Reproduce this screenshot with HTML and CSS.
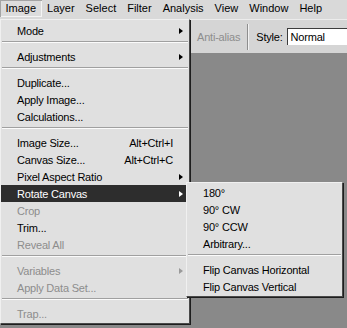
FILE: index.html
```html
<!DOCTYPE html>
<html lang="en">
<head>
    <meta charset="UTF-8">
    <meta name="viewport" content="width=device-width, initial-scale=1.0">
    <title>Image Menu</title>
    <link rel="stylesheet" href="styles.css">
</head>
<body>

    <div class="app">
        <nav class="menubar">
            <span class="menubar-item open">Image</span>
            <span class="menubar-item">Layer</span>
            <span class="menubar-item">Select</span>
            <span class="menubar-item">Filter</span>
            <span class="menubar-item">Analysis</span>
            <span class="menubar-item">View</span>
            <span class="menubar-item">Window</span>
            <span class="menubar-item">Help</span>
        </nav>

        <div class="options">
            <span class="opt-label disabled">Anti-alias</span>
            <span class="opt-sep"></span>
            <span class="opt-label">Style:</span>
            <span class="opt-select">Normal</span>
        </div>

        <div class="workspace"></div>

        <div class="menu main-menu">
            <div class="row">Mode<span class="arrow"></span></div>
            <div class="sep"></div>
            <div class="row">Adjustments<span class="arrow"></span></div>
            <div class="sep"></div>
            <div class="row">Duplicate...</div>
            <div class="row">Apply Image...</div>
            <div class="row">Calculations...</div>
            <div class="sep"></div>
            <div class="row">Image Size...<span class="key">Alt+Ctrl+I</span></div>
            <div class="row">Canvas Size...<span class="key">Alt+Ctrl+C</span></div>
            <div class="row">Pixel Aspect Ratio<span class="arrow"></span></div>
            <div class="row active">Rotate Canvas<span class="arrow"></span></div>
            <div class="row disabled">Crop</div>
            <div class="row">Trim...</div>
            <div class="row disabled">Reveal All</div>
            <div class="sep"></div>
            <div class="row disabled">Variables<span class="arrow"></span></div>
            <div class="row disabled">Apply Data Set...</div>
            <div class="sep"></div>
            <div class="row disabled">Trap...</div>
        </div>

        <div class="menu sub-menu">
            <div class="row">180°</div>
            <div class="row">90° CW</div>
            <div class="row">90° CCW</div>
            <div class="row">Arbitrary...</div>
            <div class="sep"></div>
            <div class="row">Flip Canvas Horizontal</div>
            <div class="row">Flip Canvas Vertical</div>
        </div>
    </div>

</body>
</html>
```

FILE: styles.css
```css
body {
    margin: 0;
    padding: 0;
    font-family: "Liberation Sans", Arial, sans-serif;
    font-size: 11px;
    color: #000;
    background: #898989;
    overflow: hidden;
}

.app {
    position: relative;
    height: 328px;
    display: flex;
    flex-direction: column;
}

/* top menu bar */
.menubar {
    display: flex;
    height: 19px;
    background: #d9d9d9;
    flex-shrink: 0;
}

.menubar-item {
    padding: 0 5.5px;
    height: 17px;
    line-height: 17px;
}

.menubar-item.open {
    background: #dcdcdc;
    box-shadow: inset 1px 1px 0 #a4a4a4, inset -1px -1px 0 #f4f4f4;
}

/* tool options bar */
.options {
    display: flex;
    align-items: center;
    height: 34px;
    padding-left: 197px;
    background: #d5d5d5;
    border-top: 1px solid #ececec;
    box-sizing: border-box;
    flex-shrink: 0;
    overflow: hidden;
    letter-spacing: -0.2px;
    white-space: nowrap;
}

.opt-label {
    flex-shrink: 0;
}

.opt-label.disabled {
    color: #8d8d8d;
}

.opt-sep {
    flex-shrink: 0;
    width: 1px;
    height: 26px;
    margin: 0 7px 0 7px;
    background: #8e8e8e;
    border-right: 1px solid #f2f2f2;
}

.opt-select {
    flex-shrink: 0;
    width: 80px;
    height: 17px;
    line-height: 16px;
    margin-left: 4px;
    padding-left: 3px;
    background: #fff;
    border-top: 1px solid #3c3c3c;
    border-left: 1px solid #3c3c3c;
    box-sizing: border-box;
}

.workspace {
    flex: 1;
    background: #898989;
}

/* dropdown menus */
.menu {
    position: absolute;
    background: #e0e0e0;
    border: 1px solid;
    border-color: #f0f0f0 #4a4a4a #4a4a4a #f0f0f0;
    box-shadow: 1px 1px 0 #1e1e1e;
    letter-spacing: -0.2px;
}

.main-menu {
    left: 0;
    top: 19px;
    width: 188px;
    padding: 2px 0 1px;
}

.sub-menu {
    left: 186px;
    top: 182px;
    width: 155px;
    padding: 1px 0;
}

.row {
    display: flex;
    align-items: center;
    height: 17px;
    padding: 0 16px;
    white-space: nowrap;
}

.row.active {
    background: #2d2d2d;
    color: #fff;
}

.row.disabled {
    color: #8d8d8d;
}

.key {
    margin-left: auto;
}

.arrow {
    margin-left: auto;
    margin-right: -10px;
    width: 0;
    height: 0;
    border-left: 4px solid #000;
    border-top: 3.5px solid transparent;
    border-bottom: 3.5px solid transparent;
}

.row.active .arrow {
    border-left-color: #fff;
}

.row.disabled .arrow {
    border-left-color: #9a9a9a;
}

.sep {
    margin: 2px 1px 5px;
    border-top: 1px solid #a0a0a0;
    border-bottom: 1px solid #fbfbfb;
}
```
